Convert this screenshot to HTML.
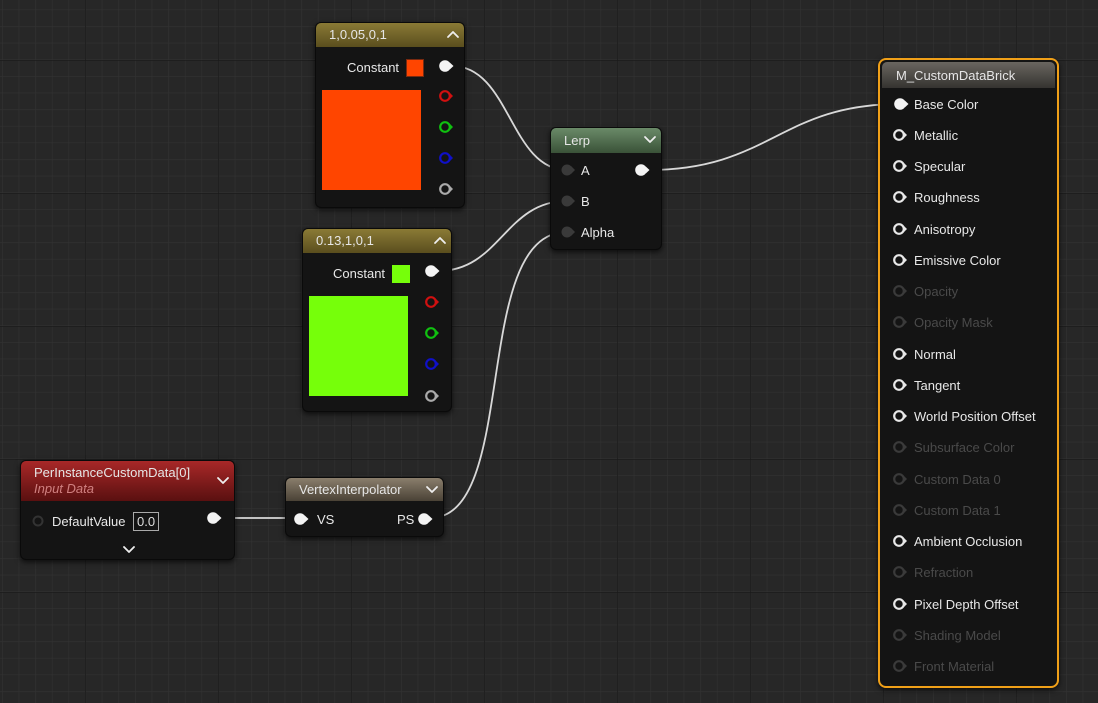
<!DOCTYPE html>
<html><head><meta charset="utf-8"><style>
*{margin:0;padding:0;box-sizing:border-box}
body{width:1098px;height:703px;overflow:hidden;background:#272727;font-family:"Liberation Sans",sans-serif;font-size:13px;color:#e8e8e8;position:relative}
svg{position:absolute;left:0;top:0}
.node{position:absolute;background:#141414;border-radius:6px;box-shadow:0 2px 6px rgba(0,0,0,.7);border:1px solid #0a0a0a}
.hd{position:absolute;left:0;top:0;right:0;border-radius:5px 5px 0 0;padding-left:13px;font-size:13px;color:#e6e6e6}
.t{position:absolute;white-space:nowrap}
.dim{color:#4a4a4a}
</style></head><body>
<svg width="1098" height="703">
<defs>
<pattern id="mn" x="2" y="9.5" width="16.625" height="16.625" patternUnits="userSpaceOnUse"><path d="M0 0V16.625M0 0H16.625" stroke="#323232" stroke-width="1.2" fill="none"/></pattern>
<pattern id="mj" x="85" y="60" width="133" height="133" patternUnits="userSpaceOnUse"><path d="M0 0V133M0 0H133" stroke="#181818" stroke-width="1.3" fill="none"/></pattern>
</defs>
<rect width="1098" height="703" fill="url(#mn)"/>
<rect width="1098" height="703" fill="url(#mj)"/>
<g fill="none" stroke="#d8d8d8" stroke-width="1.8">
<path d="M452 66 C510 66,510 170,567 170"/>
<path d="M438 271 C500 271,505 201,567 201"/>
<path d="M430 518 C520 518,470 232,567 232"/>
<path d="M220 518 L301 518"/>
<path d="M648 170 C770 170,780 104,900 104"/>
</g>
</svg>

<div class="node" style="left:315px;top:22px;width:150px;height:186px">
<div class="hd" style="height:24px;line-height:24px;background:linear-gradient(180deg,#8a7a35,#5a4e1e)">1,0.05,0,1</div>
<div class="t" style="left:31px;top:37px">Constant</div>
<div style="position:absolute;left:90px;top:36px;width:18px;height:18px;background:#ff4500;border:1px solid #7a2a10"></div>
<div style="position:absolute;left:6px;top:67px;width:99px;height:100px;background:#ff4500"></div>
</div>

<div class="node" style="left:302px;top:228px;width:150px;height:184px">
<div class="hd" style="height:24px;line-height:24px;background:linear-gradient(180deg,#8a7a35,#5a4e1e)">0.13,1,0,1</div>
<div class="t" style="left:30px;top:37px">Constant</div>
<div style="position:absolute;left:89px;top:36px;width:18px;height:18px;background:#76ff0a"></div>
<div style="position:absolute;left:6px;top:67px;width:99px;height:100px;background:#76ff0a"></div>
</div>

<div class="node" style="left:550px;top:127px;width:112px;height:123px">
<div class="hd" style="height:25px;line-height:26px;background:linear-gradient(180deg,#6a8a68,#3a5238)">Lerp</div>
<div class="t" style="left:30px;top:35px">A</div>
<div class="t" style="left:30px;top:66px">B</div>
<div class="t" style="left:30px;top:97px">Alpha</div>
</div>

<div class="node" style="left:20px;top:460px;width:215px;height:100px">
<div class="hd" style="height:40px;background:linear-gradient(180deg,#a82828,#5a1010);padding-top:4px;line-height:16px">PerInstanceCustomData[0]<br><i style="color:#d08080">Input Data</i></div>
<div class="t" style="left:31px;top:53px">DefaultValue</div>
<div class="t" style="left:112px;top:51px;border:1px solid #aaa;padding:1px 3px;color:#ddd">0.0</div>
</div>

<div class="node" style="left:285px;top:477px;width:159px;height:60px">
<div class="hd" style="height:23px;line-height:24px;background:linear-gradient(180deg,#8a7e6c,#4a4236)">VertexInterpolator</div>
<div class="t" style="left:31px;top:34px">VS</div>
<div class="t" style="left:111px;top:34px">PS</div>
</div>

<div class="node" style="left:878px;top:58px;width:181px;height:630px;border:2px solid #f0a018;border-radius:8px;background:#141414">
<div class="hd" style="left:2px;right:2px;top:2px;height:26px;line-height:28px;background:linear-gradient(180deg,#6a6660,#353330);padding-left:14px">M_CustomDataBrick</div>
<div class="t" style="left:34px;top:37px">Base Color</div>
<div class="t" style="left:34px;top:68px">Metallic</div>
<div class="t" style="left:34px;top:99px">Specular</div>
<div class="t" style="left:34px;top:130px">Roughness</div>
<div class="t" style="left:34px;top:162px">Anisotropy</div>
<div class="t" style="left:34px;top:193px">Emissive Color</div>
<div class="t dim" style="left:34px;top:224px">Opacity</div>
<div class="t dim" style="left:34px;top:255px">Opacity Mask</div>
<div class="t" style="left:34px;top:287px">Normal</div>
<div class="t" style="left:34px;top:318px">Tangent</div>
<div class="t" style="left:34px;top:349px">World Position Offset</div>
<div class="t dim" style="left:34px;top:380px">Subsurface Color</div>
<div class="t dim" style="left:34px;top:412px">Custom Data 0</div>
<div class="t dim" style="left:34px;top:443px">Custom Data 1</div>
<div class="t" style="left:34px;top:474px">Ambient Occlusion</div>
<div class="t dim" style="left:34px;top:505px">Refraction</div>
<div class="t" style="left:34px;top:537px">Pixel Depth Offset</div>
<div class="t dim" style="left:34px;top:568px">Shading Model</div>
<div class="t dim" style="left:34px;top:599px">Front Material</div>
</div>

<svg width="1098" height="703">
<defs>
<g id="r"><circle r="4.8" fill="none" stroke="currentColor" stroke-width="2.2"/><path d="M4.5 -3.5L8 0L4.5 3.5Z" fill="currentColor"/></g>
<g id="f"><circle r="5.8" fill="currentColor"/><path d="M4.8 -3.5L8.5 0L4.8 3.5Z" fill="currentColor"/></g>
</defs>
<g fill="none" stroke="#eee" stroke-width="1.8" stroke-linecap="round" stroke-linejoin="round">
<path d="M448 37L453 32L458 37"/>
<path d="M435 243L440 238L445 243"/>
<path d="M645 137L650 142L655 137"/>
<path d="M218 478L223 483L228 478"/>
<path d="M124 547L129 552L134 547"/>
<path d="M427 487L432 492L437 487"/>
</g>
<g style="color:#f4f4f4">
<use href="#f" x="445" y="66"/><use href="#f" x="431" y="271"/>
<use href="#f" x="641" y="170"/><use href="#f" x="900" y="104"/>
<use href="#f" x="213" y="518"/><use href="#f" x="300" y="519"/><use href="#f" x="424" y="519"/>
</g>
<use href="#r" x="445" y="96" style="color:#d01010"/><use href="#r" x="445" y="127" style="color:#10c010"/><use href="#r" x="445" y="158" style="color:#1010c8"/><use href="#r" x="445" y="189" style="color:#aaa"/>
<use href="#r" x="431" y="302" style="color:#d01010"/><use href="#r" x="431" y="333" style="color:#10c010"/><use href="#r" x="431" y="364" style="color:#1010c8"/><use href="#r" x="431" y="396" style="color:#aaa"/>
<g fill="#3a3a3a"><circle cx="567" cy="170" r="5.5"/><circle cx="567" cy="201" r="5.5"/><circle cx="567" cy="232" r="5.5"/><path d="M571 166L575 170L571 174ZM571 197L575 201L571 205ZM571 228L575 232L571 236Z"/></g>
<circle cx="38" cy="521" r="4.5" fill="none" stroke="#333" stroke-width="2"/>
<g style="color:#e8e8e8">
<use href="#r" x="899" y="135"/><use href="#r" x="899" y="166"/><use href="#r" x="899" y="197"/><use href="#r" x="899" y="229"/><use href="#r" x="899" y="260"/>
<use href="#r" x="899" y="354"/><use href="#r" x="899" y="385"/><use href="#r" x="899" y="416"/><use href="#r" x="899" y="541"/><use href="#r" x="899" y="604"/>
</g>
<g style="color:#3a3a3a">
<use href="#r" x="899" y="291"/><use href="#r" x="899" y="322"/><use href="#r" x="899" y="447"/><use href="#r" x="899" y="479"/><use href="#r" x="899" y="510"/><use href="#r" x="899" y="572"/><use href="#r" x="899" y="635"/><use href="#r" x="899" y="666"/>
</g>
</svg>
</body></html>
